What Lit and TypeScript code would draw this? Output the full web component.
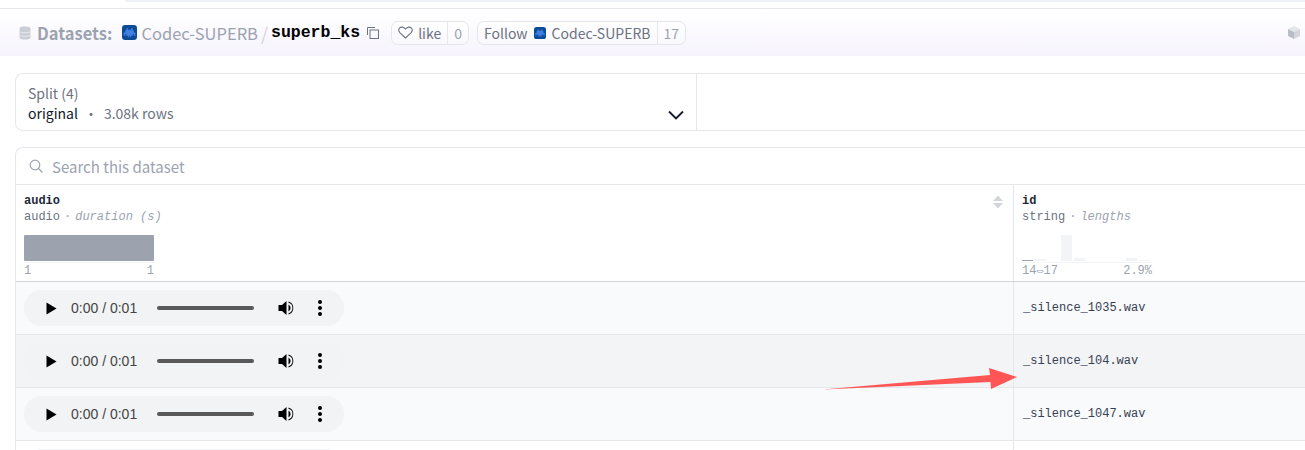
import { LitElement, html, css, svg } from "lit";
import { customElement } from "lit/decorators.js";

const logo = (size: number) => html`<svg class="logo" width=${size} height=${size} viewBox="0 0 14 14">
  <rect width="14" height="14" rx="3" fill="#0b4a94"/>
  <path d="M4 3h1.5v1.5h3V3H10v2h1v2h1.5v3H11V8.5H10V10H8.5v1.5H7.5V10h-1v1.5h-1V10H4V8.5H3V10H1.500V7H3V5h1z" fill="#3f7fe0"/>
</svg>`;

const player = () => html`<div class="player">
  <svg class="play" width="11" height="13" viewBox="0 0 11 13"><path d="M0.500 0.500 10.500 6.500 0.500 12.500z" fill="#000"/></svg>
  <span class="time">0:00 / 0:01</span>
  <span class="track"></span>
  <svg class="vol" width="17" height="16" viewBox="0 0 17 16"><path d="M0.500 5H4L8.500 1v14L4 11H0.500z" fill="#000"/><path d="M10.500 4.500a4 4 0 0 1 0 7z" fill="#000"/><path d="M10.500 1.500a6.800 6.800 0 0 1 0 13v-1.300a5.400 5.400 0 0 0 0-10.400z" fill="#000"/></svg>
  <span class="dots"><i></i><i></i><i></i></span>
</div>`;

const rows = [
  ["_silence_1035.wav", "a"],
  ["_silence_104.wav", "b"],
  ["_silence_1047.wav", "a"],
];

@customElement("app-root")
export class AppRoot extends LitElement {
  static styles = css`
    :host {
      display: block;
      position: relative;
      width: 1305px;
      height: 450px;
      overflow: hidden;
      background: #fff;
      font-family: "Noto Sans CJK SC", "Source Sans Pro", sans-serif;
      color: #111827;
    }
    .strip { height: 8px; display: flex; border-bottom: 1px solid #e5e7eb; box-sizing: content-box; }
    .strip span { margin-left: 125px; flex: 1; height: 2px; background: #eef1f8; }
    .head {
      height: 47px;
      box-sizing: border-box;
      background: linear-gradient(to bottom, #fff, #f6f3fd);
      display: flex;
      align-items: center;
      padding-left: 18px;
      font-size: 16px;
      white-space: nowrap;
    }
    .db { margin-right: 5px; }
    .ds { font-weight: 600; color: #9ca3af; font-size: 16.500px; margin-right: 10px; }
    .org { color: #9ca3af; font-size: 16.500px; margin-left: 4px; }
    .slash { color: #d1d5db; margin: 0 3px 0 3px; font-size: 18px; }
    .name { font-family: "Liberation Mono", monospace; font-weight: 700; font-size: 16.500px; color: #000; }
    .copy { margin-left: 7px; margin-right: 12px; }
    .pill {
      display: flex; align-items: stretch; height: 24px;
      border: 1px solid #e5e7eb; border-radius: 7px; box-sizing: border-box;
      font-size: 14px; color: #6b7280; background: linear-gradient(to bottom, #fff, #f9f8fe);
    }
    .pill .main { display: flex; align-items: center; }
    .pill .count { display: flex; align-items: center; border-left: 1px solid #e5e7eb; color: #9ca3af; padding: 0 6px; }
    .like { margin-right: 8px; }
    .like .main { padding: 0 6px 0 6px; gap: 5px; }
    .follow .main { padding: 0 6px; gap: 6px; }
    .spacer { flex: 1; }
    .cube { margin-right: 5px; }

    .split {
      margin: 17px 0 0 15px;
      height: 58px;
      box-sizing: border-box;
      border: 1px solid #e5e7eb;
      border-right: 0;
      border-radius: 8px 0 0 8px;
      display: flex;
    }
    .split-cell {
      width: 681px; box-sizing: border-box; border-right: 1px solid #e5e7eb;
      padding: 11px 12px 0 12px; position: relative; font-size: 14px; line-height: 20px;
      display: flex; align-items: flex-end; justify-content: space-between; padding-bottom: 7px;
    }
    .split-label { color: #6b7280; }
    .split-val { color: #111827; }
    .split-val em { font-style: normal; color: #6b7280; }
    .split-val b { font-weight: 400; color: #6b7280; margin: 0 6px; }
    .chev { margin-bottom: 3px; }

    .table {
      margin: 16px 0 0 15px;
      border: 1px solid #e5e7eb;
      border-right: 0;
      border-bottom: 0;
      border-radius: 8px 0 0 0;
    }
    .search {
      height: 36px; display: flex; align-items: center; box-sizing: border-box;
      padding-left: 13px; gap: 9px; color: #9ca3af; font-size: 15px;
      border-bottom: 1px solid #e5e7eb; height: 37px;
    }
    .cols { display: grid; grid-template-columns: 997px 1fr; height: 97px; border-bottom: 1px solid #d1d5db; box-sizing: border-box; }
    .col { font-family: "Liberation Mono", monospace; font-size: 12px; padding: 8px 8px 0 8px; box-sizing: border-box; position: relative; }
    .col + .col { border-left: 1px solid #e5e7eb; }
    .col-name { font-weight: 700; color: #1f2937; line-height: 16px; }
    .col-type { color: #6b7280; line-height: 16px; display: flex; gap: 4px; }
    .col-type i { color: #9ca3af; }
    .col-type span { color: #9ca3af; }
    .sort { position: absolute; right: 10px; top: 10px; }
    .bar { margin-top: 10px; width: 130px; height: 26px; background: #9ca3af; border-radius: 1px; }
    .hist { margin-top: 10px; width: 130px; height: 26px; display: flex; align-items: flex-end; gap: 2px; }
    .hist span { width: 11px; background: #f3f4f6; }
    .axis {
      margin-top: 1px; border-top: 1px solid #f3f4f6; width: 130px; display: flex; justify-content: space-between;
      color: #9ca3af; line-height: 17px; font-size: 12px; height: 17px;
    }
    .row { display: grid; grid-template-columns: 997px 1fr; height: 53px; border-bottom: 1px solid #e5e7eb; box-sizing: border-box; background: #f9fafb; }
    .row.b { background: #f3f4f6; }
    .row.w { background: #fff; }
    .cell { display: flex; align-items: center; padding-left: 8px; box-sizing: border-box; }
    .cell + .cell { border-left: 1px solid #e5e7eb; padding-left: 9px; font-family: "Liberation Mono", monospace; font-size: 12px; color: #374151; }

    .player {
      width: 320px; height: 36px; border-radius: 18px; background: #f1f3f4; flex: none;
      display: flex; align-items: center; box-sizing: border-box; padding-left: 22px;
      font-family: "Liberation Sans", Arial, sans-serif; color: #3c3f43;
    }
    .time { margin-left: 14px; font-size: 14px; width: 86px; white-space: nowrap; color: #444; }
    .track { width: 97px; height: 4px; border-radius: 2px; background: #595959; }
    .vol { margin-left: 24px; }
    .dots { margin-left: 23px; display: flex; flex-direction: column; gap: 2px; }
    .dots i { width: 4px; height: 4px; border-radius: 50%; background: #000; display: block; }
    .arrow { position: absolute; left: 0; top: 0; pointer-events: none; }
  `;

  render() {
    return html`
      <div class="strip"><span></span></div>
      <div class="head">
        <svg class="db" width="14" height="14" viewBox="0 0 14 14"><path d="M1.500 2.500C1.500 1 4 0.500 7 0.500s5.500 0.500 5.500 2v9c0 1.500-2.500 2-5.500 2s-5.500-0.500-5.500-2z" fill="#c9ced6"/><path d="M1.500 5.500c1 1 3 1.300 5.500 1.300s4.500-0.300 5.500-1.300M1.500 9c1 1 3 1.300 5.500 1.300s4.500-0.300 5.500-1.300" stroke="#e9ebef" fill="none"/></svg>
        <span class="ds">Datasets:</span>
        ${logo(15)}
        <span class="org">Codec-SUPERB</span>
        <span class="slash">/</span>
        <span class="name">superb_ks</span>
        <svg class="copy" width="12" height="12" viewBox="0 0 12 12" fill="none" stroke="#6b7280"><path d="M0.500 8V0.500H8"/><rect x="3" y="3" width="8.500" height="8.500"/></svg>
        <div class="pill like">
          <span class="main"><svg width="15" height="13" viewBox="0 0 15 13" fill="none" stroke="#6b7280" stroke-width="1.100"><path d="M7.500 12 1.800 6.600C0.300 5 0.500 3 1.700 1.900 3 0.700 5.500 0.700 7.500 3c2-2.300 4.500-2.300 5.800-1.100 1.200 1.100 1.400 3.100-0.100 4.700z"/></svg>like</span>
          <span class="count">0</span>
        </div>
        <div class="pill follow">
          <span class="main">Follow ${logo(12)} Codec-SUPERB</span>
          <span class="count">17</span>
        </div>
        <span class="spacer"></span>
        <svg class="cube" width="12" height="13" viewBox="0 0 12 13"><path d="M6 0 12 3 6 6 0 3z" fill="#e3e5e9"/><path d="M0 3 6 6V13L0 10z" fill="#b8bec8"/><path d="M12 3 6 6V13L12 10z" fill="#d2d6dc"/></svg>
      </div>

      <div class="split">
        <div class="split-cell">
          <div>
            <div class="split-label">Split (4)</div>
            <div class="split-val">original<b>·</b><em>3.08k rows</em></div>
          </div>
          <svg class="chev" width="16" height="10" viewBox="0 0 16 10" fill="none" stroke="#111827" stroke-width="1.800"><path d="M1 1.500 8 8.500 15 1.500"/></svg>
        </div>
      </div>

      <div class="table">
        <div class="search">
          <svg width="14" height="14" viewBox="0 0 14 14" fill="none" stroke="#9ca3af" stroke-width="1.200"><circle cx="6" cy="6" r="4.800"/><path d="M9.500 9.500 13.500 13.500"/></svg>
          <span>Search this dataset</span>
        </div>
        <div class="cols">
          <div class="col">
            <div class="col-name">audio</div>
            <div class="col-type">audio <span>·</span> <i>duration (s)</i></div>
            <svg class="sort" width="10" height="14" viewBox="0 0 10 14"><path d="M5 0.500 10 6H0z" fill="#d1d5db"/><path d="M5 13.500 10 8H0z" fill="#d1d5db"/></svg>
            <div class="bar"></div>
            <div class="axis"><span>1</span><span>1</span></div>
          </div>
          <div class="col">
            <div class="col-name">id</div>
            <div class="col-type">string <span>·</span> <i>lengths</i></div>
            <div class="hist">
              <span style="height:1px;background:#9ca3af"></span>
              <span style="height:2px"></span>
              <span style="height:0"></span>
              <span style="height:26px"></span>
              <span style="height:3px"></span>
              <span style="height:0"></span>
              <span style="height:0"></span>
              <span style="height:0"></span>
              <span style="height:3px"></span>
              <span style="height:1px"></span>
            </div>
            <div class="axis"><span>14⇔17</span><span>2.9%</span></div>
          </div>
        </div>
        ${rows.map(
          ([id, k]) => html`<div class="row ${k}">
            <div class="cell">${player()}</div>
            <div class="cell">${id}</div>
          </div>`
        )}
        <div class="row w">
          <div class="cell">${player()}</div>
          <div class="cell">_silence_1057.wav</div>
        </div>
      </div>

      <svg class="arrow" width="1305" height="450" viewBox="0 0 1305 450">
        ${svg`<path d="M823 389.500 990 375 989 368 1017 377 991 389 990.500 382z" fill="#ff5555"/>`}
      </svg>
    `;
  }
}
